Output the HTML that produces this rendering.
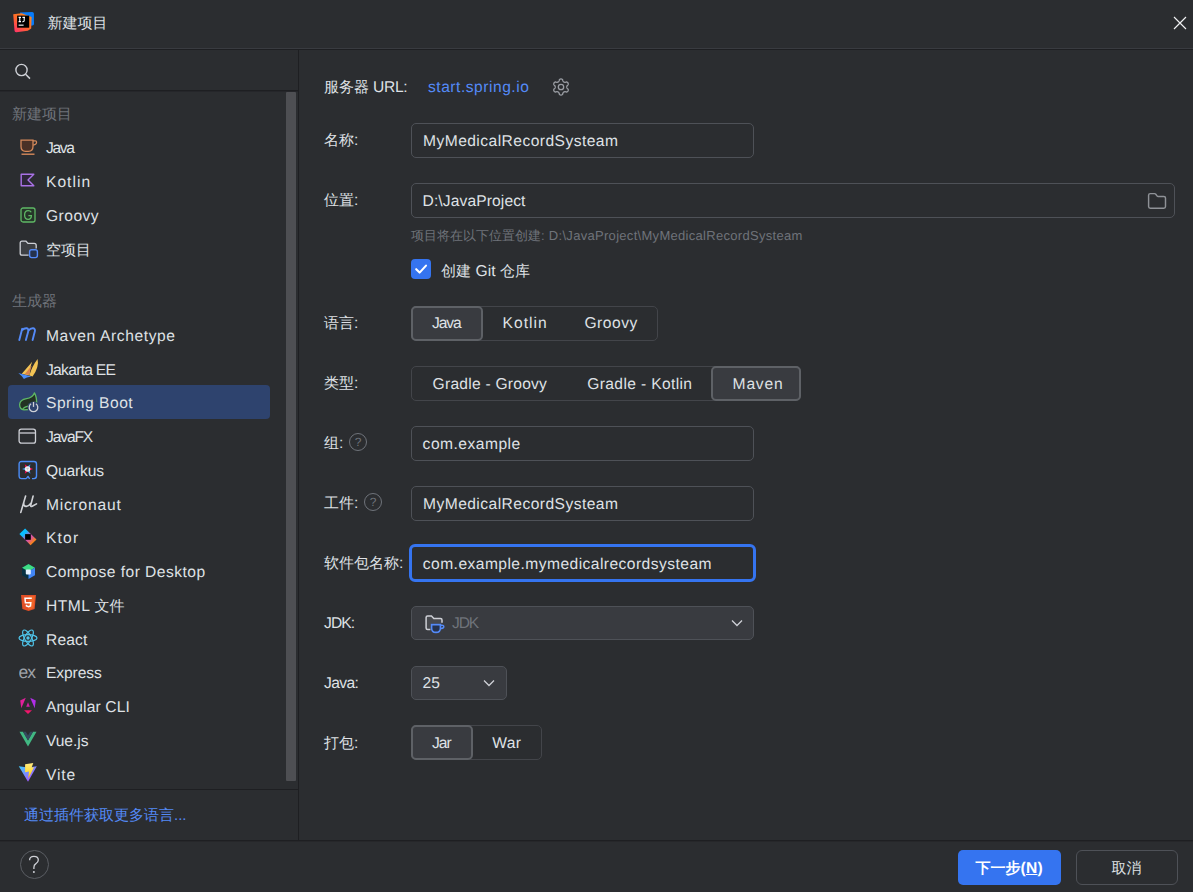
<!DOCTYPE html>
<html><head><meta charset="utf-8">
<style>
*{box-sizing:border-box;margin:0;padding:0}
html,body{width:1193px;height:892px;overflow:hidden;background:#2b2d30}
body{position:relative;font-family:"Liberation Sans",sans-serif;font-size:15.6px;color:#dfe1e5;letter-spacing:0.5px;text-rendering:geometricPrecision}
.a{position:absolute}
.cj{letter-spacing:0;font-size:15px}
.t{position:absolute;white-space:nowrap;line-height:20px}
.hl{position:absolute;left:0;width:1193px;height:1px}
.vl{position:absolute;width:1px}
.item{position:absolute;left:8px;width:262.5px;height:33.75px;border-radius:4px}
.item .ic{position:absolute;left:12px;top:8.9px;width:16px;height:16px}
.item .tx{position:absolute;left:38px;top:6.9px;line-height:20px;white-space:nowrap}
.grp{position:absolute;left:12px;color:#6f737a;line-height:20px;letter-spacing:0;font-size:15px}
.lbl{position:absolute;left:324px;line-height:20px;white-space:nowrap}
.fld{position:absolute;left:410.5px;height:34.5px;border:1px solid #4e5157;border-radius:5px}
.fld .v{position:absolute;left:11.5px;top:6.5px;line-height:20px;white-space:nowrap}
.seg{position:absolute;left:410.5px;height:35px;border:1px solid #43454a;border-radius:5px}
.sg{position:absolute;top:-1px;height:35px;text-align:center;line-height:33px;white-space:nowrap}
.sg.sel{background:#393b40;border:2px solid #5e6166;border-radius:5px;line-height:31px}
.help{position:absolute;width:18px;height:18px;border:1.2px solid #6f737a;border-radius:50%;color:#6f737a;font-size:12px;text-align:center;line-height:16px;letter-spacing:0}
</style></head><body>

<!-- title bar -->
<div class="a" style="left:0;top:0;width:1193px;height:48px;background:#2b2d30"></div>
<svg class="a" style="left:12px;top:11px" width="23" height="23" viewBox="0 0 23 23">
  <defs>
    <linearGradient id="ijg" x1="0" y1="1" x2="0.8" y2="0">
      <stop offset="0" stop-color="#ff2d6f"/><stop offset="0.55" stop-color="#ff6b2a"/><stop offset="1" stop-color="#ff8a1d"/>
    </linearGradient>
  </defs>
  <path d="M8 1.6 L20 0.9 Q21.8 0.8 21.9 2.6 L22 13 Q22 14.4 20.6 14.6 L9 15.5 Z" fill="#087cfa"/>
  <path d="M1.2 3.2 L9.5 2.2 L19.6 6 L19.2 17.6 L15.8 19.8 L4.4 21.2 Q2.6 21.4 2.5 19.6 Z" fill="url(#ijg)"/>
  <rect x="5.1" y="4.6" width="12.1" height="12.1" fill="#000"/>
  <path d="M6.6 6.4 H9 M7.8 6.4 V10.6 M6.6 10.6 H9 M10.4 6.4 H13 M12.2 6.4 V9.6 Q12.2 10.8 11 10.8 H10.3" stroke="#fff" stroke-width="1.1" fill="none"/>
  <rect x="6.6" y="13.6" width="5" height="1.1" fill="#fff"/>
</svg>
<div class="t cj" style="left:47.5px;top:13.5px">新建项目</div>
<svg class="a" style="left:1173px;top:16px" width="14" height="14" viewBox="0 0 14 14"><path d="M1 1 L13 13 M13 1 L1 13" stroke="#f0f1f3" stroke-width="1.15"/></svg>
<div class="hl" style="top:48px;background:#393b40"></div>
<div class="hl" style="top:49px;background:#1e1f22"></div>

<!-- sidebar -->
<svg class="a" style="left:14px;top:63px" width="18" height="17" viewBox="0 0 18 17"><circle cx="7.5" cy="7" r="5.6" fill="none" stroke="#ced0d6" stroke-width="1.4"/><path d="M11.6 11.2 L16 15.6" stroke="#ced0d6" stroke-width="1.5"/></svg>
<div class="a" style="left:0;top:90px;width:298px;height:1px;background:#1e1f22"></div>
<div class="a" style="left:0;top:91px;width:298px;height:1px;background:#25262a"></div>
<div class="vl" style="left:298px;top:50px;height:791px;background:#1e1f22"></div>
<div class="a" style="left:286px;top:92px;width:10px;height:689px;background:#4e4f53;border-radius:1px"></div>

<div class="grp" style="top:104.70px">新建项目</div>
<div class="a" style="left:19.5px;top:138.85px;line-height:0"><svg width="18" height="17" viewBox="0 0 18 17"><path d="M1 1.2 H13 V7.5 Q13 12.3 8.5 12.3 H5.5 Q1 12.3 1 7.5 Z" fill="#4a3126" stroke="#d6895a" stroke-width="1.3"/><path d="M13 1.8 H15.4 Q16.6 1.8 16.6 3.3 Q16.6 5.6 13.2 6.2" fill="none" stroke="#d6895a" stroke-width="1.2"/><path d="M1.5 15.2 H14.5" stroke="#d6895a" stroke-width="1.4"/></svg></div>
<div class="t" style="left:46px;top:139.35px;letter-spacing:-1.37px;">Java</div>
<div class="a" style="left:20px;top:172.90px;line-height:0"><svg width="16" height="16" viewBox="0 0 16 16"><path d="M1.2 1.2 H13.8 L8 7 L13.8 12.8 H1.2 Z" fill="#2d2639" stroke="#a972e5" stroke-width="1.4" stroke-linejoin="round"/></svg></div>
<div class="t" style="left:46px;top:173.10px;letter-spacing:1.02px;">Kotlin</div>
<div class="a" style="left:20px;top:206.65px;line-height:0"><svg width="16" height="16" viewBox="0 0 16 16"><rect x="1" y="1" width="14" height="14" rx="2" fill="#263529" stroke="#5fb865" stroke-width="1.3"/><path d="M11.2 5.2 Q10.4 3.6 8.2 3.6 Q4.6 3.6 4.6 8 Q4.6 12.4 8.2 12.4 Q11.4 12.4 11.4 8.6 H8.4" fill="none" stroke="#5fb865" stroke-width="1.3"/></svg></div>
<div class="t" style="left:46px;top:206.85px;letter-spacing:0.48px;">Groovy</div>
<div class="a" style="left:18.7px;top:239.50px;line-height:0"><svg width="20" height="19" viewBox="0 0 20 19"><path d="M9.6 15.2 H3 Q1.2 15.2 1.2 13.4 V3 Q1.2 1.2 3 1.2 H7 L9 3.4 H15.2 Q17.2 3.4 17.2 5.4 V8.6 L9.6 15.2 Z" fill="#3d3f43" stroke="none"/><path d="M9.6 15.2 H3 Q1.2 15.2 1.2 13.4 V3 Q1.2 1.2 3 1.2 H7 L9 3.4 H15.2 Q17.2 3.4 17.2 5.4 V8.6" fill="none" stroke="#ced0d6" stroke-width="1.3"/><rect x="10.6" y="9.8" width="7.8" height="7.8" rx="2" fill="#25324d" stroke="#548af7" stroke-width="1.4"/></svg></div>
<div class="t" style="left:46px;top:240.60px;letter-spacing:0;font-size:15px;">空项目</div>
<div class="grp" style="top:292.25px">生成器</div>
<div class="a" style="left:17.7px;top:327.10px;line-height:0"><svg width="20" height="15" viewBox="0 0 20 15"><path d="M1.3 13 L4.2 1.8 M3.9 3.4 Q6.3 1 8.7 1.3 Q10.9 1.8 10.2 4.4 L7.9 13 M10.1 4 Q12.6 1 15.2 1.3 Q17.5 1.8 16.8 4.6 L14.6 13" fill="none" stroke="#548af7" stroke-width="1.9" stroke-linecap="round" stroke-linejoin="round"/></svg></div>
<div class="t" style="left:46px;top:326.90px;letter-spacing:0.61px;">Maven Archetype</div>
<div class="a" style="left:16px;top:354.85px;line-height:0"><svg width="24" height="26" viewBox="0 0 24 26"><path d="M21.6 4.1 Q23.4 12 16.6 21.6 L13.4 20.4 Q16.2 11 21.6 4.1 Z" fill="#f3c455"/><path d="M16.2 6.7 L5.8 18.7 L13.4 20.4 Q14 12 16.2 6.7 Z" fill="#f3c455"/><path d="M15.7 10.5 L8.7 19.2 L13.1 20.1 Z" fill="#d9824c"/><path d="M2.3 18.1 Q9 20 15.4 21.6 Q10.2 22.2 7.9 23.9 Q5.5 20.6 2.3 18.1 Z" fill="#4a8cf7"/></svg></div>
<div class="t" style="left:46px;top:360.65px;letter-spacing:-0.7px;">Jakarta EE</div>
<div class="a" style="left:8px;top:385.32px;width:262px;height:33.75px;border-radius:4px;background:#2e436e"></div>
<div class="a" style="left:16px;top:390.00px;line-height:0"><svg width="24" height="24" viewBox="0 0 24 24"><path d="M18.4 2.9 Q16.5 7.6 10.5 8.7 Q4 9.8 3.6 14.5 Q3.6 19.5 8 19.8 L12.5 19.5 L13.5 14 Q17 12.5 20.7 12.2 Q20.4 6 18.4 2.9 Z" fill="#233223" stroke="#5fb865" stroke-width="1.3" stroke-linejoin="round"/><path d="M6.7 18.7 Q9 17 12 16.2" fill="none" stroke="#5fb865" stroke-width="1.3"/><circle cx="17.5" cy="17.5" r="6" fill="#2e436e"/><path d="M15.1 13.8 A4.3 4.3 0 1 0 19.9 13.8" fill="none" stroke="#ced0d6" stroke-width="1.3"/><path d="M17.5 12 V16.9" stroke="#ced0d6" stroke-width="1.3"/></svg></div>
<div class="t" style="left:46px;top:394.40px;letter-spacing:0.52px;">Spring Boot</div>
<div class="a" style="left:18.2px;top:427.55px;line-height:0"><svg width="19" height="17" viewBox="0 0 19 17"><rect x="1.1" y="1.2" width="16.4" height="14" rx="2.2" fill="none" stroke="#ced0d6" stroke-width="1.3"/><path d="M1.5 5 H17" stroke="#ced0d6" stroke-width="1.3"/></svg></div>
<div class="t" style="left:46px;top:428.15px;letter-spacing:-1.12px;">JavaFX</div>
<div class="a" style="left:18px;top:459.50px;line-height:0"><svg width="20" height="20" viewBox="0 0 20 20"><path d="M8.3 18.6 H3.6 Q1.1 18.6 1.1 16.1 V4 Q1.1 1.5 3.6 1.5 H16 Q18.5 1.5 18.5 4 V16.1 Q18.5 18.6 16 18.6 H14 M8.3 18.6 L10 16.4 L11.6 18.8" fill="none" stroke="#4b8df7" stroke-width="1.4" stroke-linejoin="round"/><path d="M7.52 7.80 L6.80 4.15 L9.60 6.60 Z" fill="#ff004a"/><path d="M9.60 6.60 L12.40 4.15 L11.68 7.80 Z" fill="#4695eb"/><path d="M11.68 7.80 L15.20 9.00 L11.68 10.20 Z" fill="#ff004a"/><path d="M11.68 10.20 L12.40 13.85 L9.60 11.40 Z" fill="#4695eb"/><path d="M9.60 11.40 L6.80 13.85 L7.52 10.20 Z" fill="#ff004a"/><path d="M7.52 10.20 L4.00 9.00 L7.52 7.80 Z" fill="#4695eb"/><circle cx="9.6" cy="9.0" r="2.7" fill="#f2f2f2"/><path d="M8.2 8.3 H11 M9.6 8.3 V10.4" stroke="#b8b8b8" stroke-width="0.6"/></svg></div>
<div class="t" style="left:46px;top:461.90px;letter-spacing:-0.15px;">Quarkus</div>
<div class="a" style="left:18px;top:493.85px;line-height:0"><svg width="20" height="20" viewBox="0 0 20 20"><path d="M7.6 2 L2.8 18.4 M5.8 8.6 Q5.4 12.6 8.3 12.4 Q10.8 12.2 12.9 9.2 M15.1 2 L12.8 11 Q12.4 13 14.2 12.3 L18.5 9.9" fill="none" stroke="#d0d2d6" stroke-width="1.6" stroke-linecap="round" stroke-linejoin="round"/></svg></div>
<div class="t" style="left:46px;top:495.65px;letter-spacing:0.79px;">Micronaut</div>
<div class="a" style="left:16px;top:525.20px;line-height:0"><svg width="24" height="24" viewBox="0 0 24 24"><defs><linearGradient id="kg" x1="0" y1="0" x2="1" y2="1"><stop offset="0.3" stop-color="#08bdff"/><stop offset="0.5" stop-color="#c757bc"/><stop offset="0.62" stop-color="#d9569c"/><stop offset="0.85" stop-color="#ff8c00"/></linearGradient></defs><path d="M3.4 9.1 L9.1 3.4 L20.5 14.6 L14.6 20.3 Z" fill="url(#kg)"/><rect x="9.1" y="9.1" width="5.7" height="5.7" fill="#000"/></svg></div>
<div class="t" style="left:46px;top:529.40px;letter-spacing:1.17px;">Ktor</div>
<div class="a" style="left:19.5px;top:563.25px;line-height:0"><svg width="17" height="17" viewBox="0 0 17 17"><path d="M8.5 1 L15 4.7 V12.3 L8.5 16 L2 12.3 V4.7 Z" fill="#073042"/><path d="M8.5 1 L15 4.7 L8.5 8.5 L2 4.7 Z" fill="#3ddc84"/><path d="M15 4.7 V12.3 L8.5 16 V8.5 Z" fill="#4285f4"/><rect x="5.8" y="6.4" width="5" height="5" rx="1" fill="#e6f2ff"/></svg></div>
<div class="t" style="left:46px;top:563.15px;letter-spacing:0.46px;">Compose for Desktop</div>
<div class="a" style="left:19.5px;top:594.40px;line-height:0"><svg width="17" height="18" viewBox="0 0 17 18"><path d="M1 1 H16 L14.6 15 L8.5 17 L2.4 15 Z" fill="#e34f26"/><path d="M8.5 2.3 H14.7 L13.5 14.2 L8.5 15.7 Z" fill="#ef652a"/><path d="M11.8 4.2 H5 L5.4 8.8 H10.8 L10.5 12 L8.5 12.6 L6.5 12 L6.4 10.8" fill="none" stroke="#fff" stroke-width="1.5"/></svg></div>
<div class="t" style="left:46px;top:596.90px;letter-spacing:0.48px;">HTML <span class="cj">文件</span></div>
<div class="a" style="left:17.5px;top:629.45px;line-height:0"><svg width="20" height="18" viewBox="0 0 20 18"><g fill="none" stroke="#4fc3e8" stroke-width="1.2"><ellipse cx="10" cy="9" rx="9" ry="3.4"/><ellipse cx="10" cy="9" rx="9" ry="3.4" transform="rotate(60 10 9)"/><ellipse cx="10" cy="9" rx="9" ry="3.4" transform="rotate(-60 10 9)"/></g><circle cx="10" cy="9" r="1.7" fill="#4fc3e8"/></svg></div>
<div class="t" style="left:46px;top:630.65px;letter-spacing:0.13px;">React</div>
<div class="a" style="left:19px;top:664.70px;line-height:0"><svg width="21" height="16" viewBox="0 0 21 16"><text x="-0.5" y="12.5" font-family="Liberation Sans" font-size="17.5" fill="#9ea2a8" letter-spacing="-1">ex</text></svg></div>
<div class="t" style="left:46px;top:664.40px;letter-spacing:-0.1px;">Express</div>
<div class="a" style="left:14px;top:689.65px;line-height:0"><svg width="24" height="26" viewBox="0 0 24 26"><path d="M11.8 7.8 L6.2 10.4 L7.3 18.2 Z" fill="#e0209a"/><path d="M16.2 7.8 L21.8 10.4 L20.7 18.2 Z" fill="#b02ee6"/><path d="M14 12.2 L12.2 16.8 H15.8 Z" fill="#d51fa6"/><path d="M10 20.2 H18 L14 24 Z" fill="#f0166b"/></svg></div>
<div class="t" style="left:46px;top:698.15px;letter-spacing:0.15px;">Angular CLI</div>
<div class="a" style="left:18.5px;top:730.70px;line-height:0"><svg width="18" height="16" viewBox="0 0 18 16"><path d="M0.5 0.8 H4 L9 9.5 L14 0.8 H17.5 L9 15.5 Z" fill="#41b883"/><path d="M4 0.8 H6.8 L9 4.6 L11.2 0.8 H14 L9 9.5 Z" fill="#34495e"/></svg></div>
<div class="t" style="left:46px;top:731.90px;letter-spacing:-0.06px;">Vue.js</div>
<div class="a" style="left:18px;top:761.95px;line-height:0"><svg width="20" height="21" viewBox="0 0 20 21"><defs><linearGradient id="vg" x1="0" y1="0" x2="1" y2="1"><stop offset="0" stop-color="#41d1ff"/><stop offset="1" stop-color="#bd34fe"/></linearGradient><linearGradient id="vy" x1="0" y1="0" x2="0" y2="1"><stop offset="0" stop-color="#ffea83"/><stop offset="0.6" stop-color="#ffdd35"/><stop offset="1" stop-color="#ffa800"/></linearGradient></defs><path d="M0.8 4.3 L9.8 5.6 L18.8 4.3 L10 19.8 Z" fill="url(#vg)"/><path d="M7.1 2.2 L15.3 1 L13.6 5.5 L16 5.2 L10.2 16.8 L11 9.5 L7.1 10.2 Z" fill="url(#vy)"/></svg></div>
<div class="t" style="left:46px;top:765.65px;letter-spacing:0.87px;">Vite</div>

<div class="a" style="left:0;top:789px;width:298px;height:1px;background:#1e1f22"></div>
<div class="t cj" style="left:24px;top:806px;color:#548af7">通过插件获取更多语言...</div>

<div class="lbl" style="top:77.60px;letter-spacing:-0.3px;"><span class="cj">服务器</span> URL:</div>
<div class="t" style="left:428px;top:78.30px;letter-spacing:0.52px;color:#548af7;">start.spring.io</div>
<svg class="a" style="left:552px;top:78px" width="18" height="18" viewBox="0 0 18 18"><path fill="none" stroke="#9a9da3" stroke-width="1.3" stroke-linejoin="round" d="M14.75 9.00 L14.76 9.20 L14.80 9.41 L14.86 9.62 L14.94 9.83 L15.05 10.07 L15.19 10.32 L15.41 10.60 L15.92 10.98 L16.10 11.31 L16.20 11.62 L16.24 11.92 L16.23 12.22 L16.18 12.50 L16.09 12.77 L15.97 13.02 L15.81 13.26 L15.62 13.47 L15.40 13.65 L15.15 13.80 L14.87 13.92 L14.55 14.00 L14.18 14.00 L13.59 13.75 L13.24 13.71 L12.95 13.70 L12.69 13.73 L12.46 13.76 L12.25 13.82 L12.06 13.89 L11.88 13.98 L11.71 14.09 L11.55 14.22 L11.39 14.38 L11.25 14.56 L11.10 14.77 L10.96 15.02 L10.82 15.35 L10.74 15.98 L10.55 16.31 L10.33 16.54 L10.09 16.73 L9.83 16.87 L9.56 16.97 L9.28 17.03 L9.00 17.05 L8.72 17.03 L8.44 16.97 L8.17 16.87 L7.91 16.73 L7.67 16.54 L7.45 16.31 L7.26 15.98 L7.18 15.35 L7.04 15.02 L6.90 14.77 L6.75 14.56 L6.61 14.38 L6.45 14.22 L6.29 14.09 L6.13 13.98 L5.94 13.89 L5.75 13.82 L5.54 13.76 L5.31 13.73 L5.05 13.70 L4.76 13.71 L4.41 13.75 L3.82 14.00 L3.45 14.00 L3.13 13.92 L2.85 13.80 L2.60 13.65 L2.38 13.47 L2.19 13.26 L2.03 13.02 L1.91 12.77 L1.82 12.50 L1.77 12.22 L1.76 11.92 L1.80 11.62 L1.90 11.31 L2.08 10.98 L2.59 10.60 L2.81 10.32 L2.95 10.07 L3.06 9.83 L3.14 9.62 L3.20 9.41 L3.24 9.20 L3.25 9.00 L3.24 8.80 L3.20 8.59 L3.14 8.38 L3.06 8.17 L2.95 7.93 L2.81 7.68 L2.59 7.40 L2.08 7.02 L1.90 6.69 L1.80 6.38 L1.76 6.08 L1.77 5.78 L1.82 5.50 L1.91 5.23 L2.03 4.97 L2.19 4.74 L2.38 4.53 L2.60 4.35 L2.85 4.20 L3.13 4.08 L3.45 4.00 L3.82 4.00 L4.41 4.25 L4.76 4.29 L5.05 4.30 L5.31 4.27 L5.54 4.24 L5.75 4.18 L5.94 4.11 L6.12 4.02 L6.29 3.91 L6.45 3.78 L6.61 3.62 L6.75 3.44 L6.90 3.23 L7.04 2.98 L7.18 2.65 L7.26 2.02 L7.45 1.69 L7.67 1.46 L7.91 1.27 L8.17 1.13 L8.44 1.03 L8.72 0.97 L9.00 0.95 L9.28 0.97 L9.56 1.03 L9.83 1.13 L10.09 1.27 L10.33 1.46 L10.55 1.69 L10.74 2.02 L10.82 2.65 L10.96 2.98 L11.10 3.23 L11.25 3.44 L11.39 3.62 L11.55 3.78 L11.71 3.91 L11.88 4.02 L12.06 4.11 L12.25 4.18 L12.46 4.24 L12.69 4.27 L12.95 4.30 L13.24 4.29 L13.59 4.25 L14.18 4.00 L14.55 4.00 L14.87 4.08 L15.15 4.20 L15.40 4.35 L15.62 4.53 L15.81 4.74 L15.97 4.97 L16.09 5.23 L16.18 5.50 L16.23 5.78 L16.24 6.08 L16.20 6.38 L16.10 6.69 L15.92 7.02 L15.41 7.40 L15.19 7.68 L15.05 7.93 L14.94 8.17 L14.86 8.38 L14.80 8.59 L14.76 8.80 L14.75 9.00 Z"/><circle cx="9" cy="9" r="2.7" fill="none" stroke="#9a9da3" stroke-width="1.3"/></svg>
<div class="lbl" style="top:130.85px;"><span class="cj">名称</span>:</div>
<div class="fld" style="left:410.5px;top:123px;width:343.5px;height:34.5px;"></div>
<div class="t" style="left:423px;top:131.55px;letter-spacing:0.45px;">MyMedicalRecordSysteam</div>
<div class="lbl" style="top:191.10px;"><span class="cj">位置</span>:</div>
<div class="fld" style="left:410.5px;top:183.2px;width:764.5px;height:34.5px;"></div>
<div class="t" style="left:422.5px;top:191.80px;letter-spacing:0.12px;">D:\JavaProject</div>
<svg class="a" style="left:1147px;top:192px" width="20" height="18" viewBox="0 0 20 18"><path d="M1.6 3.3 Q1.6 1.6 3.3 1.6 H7.6 Q8.3 1.6 8.8 2.2 L10 3.8 Q10.4 4.4 11.2 4.4 H16.8 Q18.5 4.4 18.5 6.1 V14.6 Q18.5 16.3 16.8 16.3 H3.3 Q1.6 16.3 1.6 14.6 Z" fill="none" stroke="#8f9297" stroke-width="1.45"/></svg>
<div class="t" style="left:411px;top:226.3px;font-size:13px;color:#6f737a;letter-spacing:0.3px"><span style="letter-spacing:0">项目将在以下位置创建</span>: D:\JavaProject\MyMedicalRecordSysteam</div>
<div class="a" style="left:411px;top:259px;width:20px;height:20px;border-radius:4px;background:#3574f0"></div>
<svg class="a" style="left:411px;top:259px" width="20" height="20" viewBox="0 0 20 20"><path d="M5.2 10.2 L8.6 13.6 L15 6.6" fill="none" stroke="#fff" stroke-width="2.1" stroke-linecap="round" stroke-linejoin="round"/></svg>
<div class="t" style="left:441px;top:261.50px;letter-spacing:0.1px;"><span class="cj">创建</span> Git <span class="cj">仓库</span></div>
<div class="lbl" style="top:313.60px;"><span class="cj">语言</span>:</div>
<div class="a" style="left:410.6px;top:305.5px;width:247.0px;height:35px;border:1px solid #43454a;border-radius:5px"></div>
<div class="a" style="left:410.6px;top:305.5px;width:72.39999999999998px;height:35px;border:2px solid #5e6166;border-radius:5px;background:#393b40"></div>
<div class="t" style="left:432px;top:314.30px;letter-spacing:-1.13px;">Java</div>
<div class="t" style="left:502.6px;top:314.30px;letter-spacing:1.02px;">Kotlin</div>
<div class="t" style="left:584.4px;top:314.30px;letter-spacing:0.52px;">Groovy</div>
<div class="lbl" style="top:373.60px;"><span class="cj">类型</span>:</div>
<div class="a" style="left:411px;top:365.8px;width:390.4px;height:35px;border:1px solid #43454a;border-radius:5px"></div>
<div class="a" style="left:711px;top:365.8px;width:90.39999999999998px;height:35px;border:2px solid #5e6166;border-radius:5px;background:#393b40"></div>
<div class="t" style="left:432.6px;top:374.60px;letter-spacing:0.24px;">Gradle - Groovy</div>
<div class="t" style="left:587.3px;top:374.60px;letter-spacing:0.36px;">Gradle - Kotlin</div>
<div class="t" style="left:732.6px;top:374.60px;letter-spacing:0.8px;">Maven</div>
<div class="lbl" style="top:433.60px;"><span class="cj">组</span>:</div>
<div class="help" style="left:349px;top:433.4px">?</div>
<div class="fld" style="left:410.5px;top:426px;width:343.5px;height:34.5px;"></div>
<div class="t" style="left:422.6px;top:434.55px;letter-spacing:0.49px;">com.example</div>
<div class="lbl" style="top:493.60px;"><span class="cj">工件</span>:</div>
<div class="help" style="left:364px;top:493.4px">?</div>
<div class="fld" style="left:410.5px;top:486px;width:343.5px;height:34.5px;"></div>
<div class="t" style="left:423px;top:494.55px;letter-spacing:0.45px;">MyMedicalRecordSysteam</div>
<div class="lbl" style="top:553.60px;"><span class="cj">软件包名称</span>:</div>
<div class="a" style="left:409px;top:544.2px;width:346.5px;height:38px;border:3px solid #3574f0;border-radius:6px"></div>
<div class="t" style="left:422.8px;top:554.50px;letter-spacing:0.45px;">com.example.mymedicalrecordsysteam</div>
<div class="lbl" style="top:613.60px;letter-spacing:-0.87px;">JDK:</div>
<div class="fld" style="left:410.5px;top:605.8px;width:343.5px;height:34.5px;background:#393b40;"></div>
<svg class="a" style="left:420px;top:610px" width="30" height="28" viewBox="0 0 30 28"><path d="M11 19.6 H7.6 Q6.1 19.6 6.1 18.1 V7.6 Q6.1 6.1 7.6 6.1 H11.5 L13.8 8.5 H20.5 Q22 8.5 22 10 V13.5 H11 Z" fill="#47494e"/><path d="M10.4 19.6 H7.6 Q6.1 19.6 6.1 18.1 V7.6 Q6.1 6.1 7.6 6.1 H11.5 L13.8 8.5 H20.5 Q22 8.5 22 10 V12.8" fill="none" stroke="#ced0d6" stroke-width="1.5"/><path d="M11.6 14.6 H20.4 V18.2 Q20.4 22.4 16 22.4 Q11.6 22.4 11.6 18.2 Z" fill="#25324d" stroke="#548af7" stroke-width="1.6"/><path d="M20.4 15.2 Q23.8 14.8 23.8 16.8 Q23.6 18.6 20.2 18.6" fill="none" stroke="#548af7" stroke-width="1.5"/></svg>
<div class="t" style="left:452px;top:614.30px;letter-spacing:-1.1px;color:#6f737a;">JDK</div>
<svg class="a" style="left:730px;top:618px" width="14" height="10" viewBox="0 0 14 10"><path d="M2 2.5 L7 7.5 L12 2.5" fill="none" stroke="#ced0d6" stroke-width="1.3"/></svg>
<div class="lbl" style="top:673.60px;letter-spacing:-0.6px;">Java:</div>
<div class="fld" style="left:410.5px;top:665.5px;width:96px;height:34.8px;background:#393b40;"></div>
<div class="t" style="left:422.5px;top:674.30px;letter-spacing:0.1px;">25</div>
<svg class="a" style="left:482px;top:678px" width="14" height="10" viewBox="0 0 14 10"><path d="M2 2.5 L7 7.5 L12 2.5" fill="none" stroke="#ced0d6" stroke-width="1.3"/></svg>
<div class="lbl" style="top:733.60px;"><span class="cj">打包</span>:</div>
<div class="a" style="left:410.7px;top:725.4px;width:131.09999999999997px;height:35px;border:1px solid #43454a;border-radius:5px"></div>
<div class="a" style="left:410.7px;top:725.4px;width:62.10000000000002px;height:35px;border:2px solid #5e6166;border-radius:5px;background:#393b40"></div>
<div class="t" style="left:432px;top:734.20px;letter-spacing:-1.0px;">Jar</div>
<div class="t" style="left:492.3px;top:734.20px;letter-spacing:0.35px;">War</div>
<!-- footer -->
<div class="hl" style="top:840px;background:#1e1f22"></div>
<div class="hl" style="top:841px;background:#26272a"></div>

<div class="a" style="left:20px;top:850px;width:29px;height:29px;border:1px solid #5a5d63;border-radius:50%"></div>
<svg class="a" style="left:20px;top:850px" width="29" height="29" viewBox="0 0 29 29"><path d="M9.6 10.2 Q9.6 6.3 13.9 6.3 Q18.3 6.3 18.3 10.1 Q18.3 12.5 15.7 13.9 Q13.9 14.9 13.9 17.4 V19" fill="none" stroke="#ced0d6" stroke-width="1.3"/><circle cx="13.9" cy="22" r="1" fill="#ced0d6"/></svg>
<div class="a" style="left:958px;top:850.2px;width:102.5px;height:35.2px;border-radius:5px;background:#3574f0"></div>
<div class="t" style="left:958px;top:859.3px;width:102.5px;text-align:center;color:#fff;font-weight:bold;letter-spacing:0.2px"><span class="cj">下一步</span>(<u>N</u>)</div>
<div class="a" style="left:1075.5px;top:850.2px;width:102.6px;height:35px;border-radius:6px;border:1.5px solid #4e5157"></div>
<div class="t cj" style="left:1075.7px;top:859.3px;width:101.8px;text-align:center">取消</div>


</body></html>
